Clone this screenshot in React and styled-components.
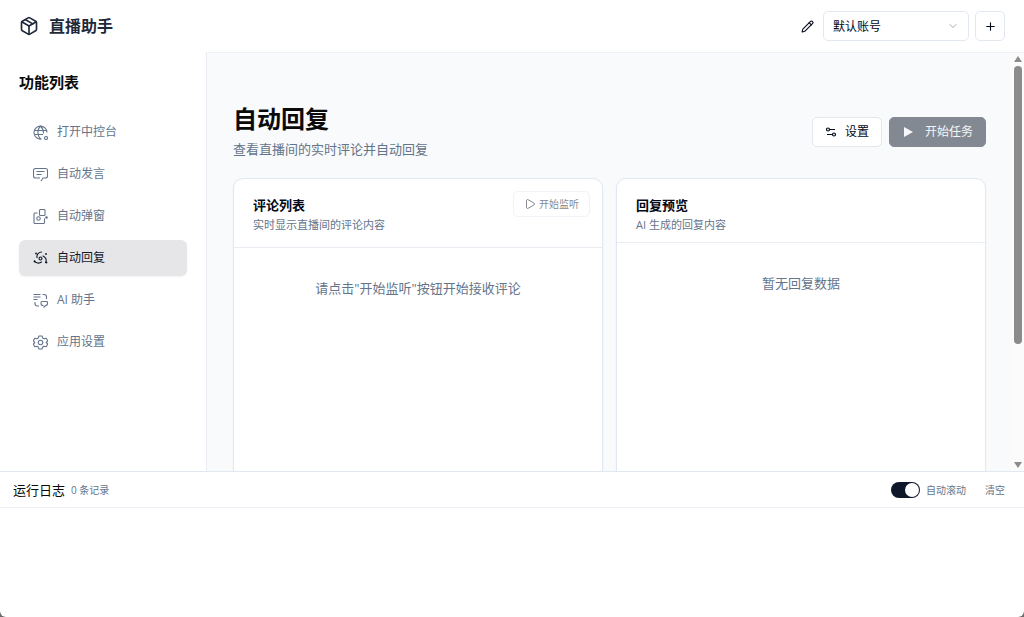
import React, { useState } from 'react'
import styled, { createGlobalStyle } from 'styled-components';
import { Pencil, Plus, ChevronDown, Play, Package } from 'lucide-react';

const GlobalStyle = createGlobalStyle`
*{
  box-sizing: border-box;
}
body{
  margin: 0;
  background-color: #6b6b6b;
}
button, select, input{
  font: inherit;
  color: inherit;
  margin: 0;
}
h1, h2, h3, p{
  margin: 0;
}
`
const Container = styled.div`
height: 100vh;
display: flex;
flex-direction: column;
overflow: hidden;
background-color: #ffffff;
border-radius: 0 0 6px 6px;
color: #020817;
font-family: "Open Sans", "Noto Sans CJK SC", sans-serif;
font-size: 12px;
line-height: 18px;
`
const Header = styled.header`
flex: none;
height: 52px;
padding: 0 19px;
display: flex;
align-items: center;
justify-content: space-between;
`
const Logo = styled.div`
display: flex;
align-items: center;
gap: 10px;
font-size: 16px;
font-weight: bold;
color: #1e293b;
`
const Account = styled.div`
display: flex;
align-items: center;
gap: 6px;
`
const IconButton = styled.button`
width: ${({$plain})=>$plain ? '20px' : '30px'};
height: 30px;
padding: 0;
display: flex;
align-items: center;
justify-content: center;
border: 1px solid ${({$plain})=>$plain ? 'transparent' : '#e2e8f0'};
border-radius: 5px;
background-color: transparent;
cursor: pointer;
`
const SelectBox = styled.label`
position: relative;
width: 146px;
svg{
  position: absolute;
  right: 10px;
  top: 9px;
  color: #a3adba;
  pointer-events: none;
}
`
const Select = styled.select`
appearance: none;
display: block;
width: 100%;
height: 30px;
padding: 1px 9px 0;
border: 1px solid #e2e8f0;
border-radius: 5px;
background-color: #ffffff;
`
const Body = styled.div`
flex: 1;
min-height: 0;
display: flex;
`
const Sidebar = styled.aside`
flex: none;
width: 206px;
padding: 20px 19px;
`
const SideTitle = styled.h2`
font-size: 15px;
line-height: 20px;
margin-bottom: 22px;
color: #0a0a0a;
`
const Nav = styled.nav`
display: flex;
flex-direction: column;
gap: 6px;
`
const Item = styled.a`
height: 36px;
padding: 0 14px;
display: flex;
align-items: center;
gap: 9px;
border-radius: 6px;
text-decoration: none;
color: ${({$active})=>$active ? '#0f172a' : '#64748b'};
background-color: ${({$active})=>$active ? '#e6e6e9' : 'transparent'};
box-shadow: ${({$active})=>$active ? '0 1px 2px #0000000d' : 'none'};
`
const Main = styled.main`
flex: 1;
min-width: 0;
display: flex;
border-top: 1px solid #edf0f4;
border-left: 1px solid #e9edf3;
background-color: #f8fafc;
`
const Content = styled.div`
flex: 1;
min-width: 0;
padding: 51px 26px 0;
overflow: hidden;
`
const ScrollBar = styled.div`
flex: none;
width: 12px;
padding: 3px 0;
display: flex;
flex-direction: column;
align-items: center;
gap: 4px;
background-color: #fbfbfc;
color: #8b8b8b;
svg{
  flex: none;
}
`
const Track = styled.div`
flex: 1;
width: 8px;
`
const Thumb = styled.div`
height: 71%;
border-radius: 4px;
background-color: #8b8b8b;
`
const PageHead = styled.div`
display: flex;
align-items: center;
justify-content: space-between;
margin-bottom: 19px;
`
const Title = styled.h1`
font-size: 24px;
line-height: 30px;
margin-bottom: 5px;
color: #0a0a0a;
`
const Text = styled.p`
font-size: ${({$small})=>$small ? '11px' : '13px'};
line-height: 20px;
color: #64748b;
`
const Actions = styled.div`
display: flex;
gap: 7px;
`
const Button = styled.button`
height: 30px;
padding: 0 12px;
display: flex;
align-items: center;
gap: ${({$primary})=>$primary ? '11px' : '8px'};
border: 1px solid ${({$primary})=>$primary ? '#838993' : '#e2e8f0'};
border-radius: 5px;
color: ${({$primary})=>$primary ? '#f5f7f9' : '#020817'};
background-color: ${({$primary})=>$primary ? '#838993' : '#ffffff'};
cursor: pointer;
`
const ListenButton = styled.button`
height: 26px;
padding: 0 10px;
display: flex;
align-items: center;
gap: 3px;
border: 1px solid #f0f3f7;
border-radius: 5px;
background-color: #ffffff;
color: #85898f;
font-size: 10px;
cursor: pointer;
`
const Cards = styled.div`
display: grid;
grid-template-columns: 1fr 1fr;
gap: 13px;
`
const Card = styled.section`
height: 460px;
border: 1px solid #e2e8f0;
border-radius: 10px;
background-color: #ffffff;
box-shadow: 0 1px 2px #0000000d;
`
const CardHead = styled.div`
display: flex;
justify-content: space-between;
padding: ${({$tall})=>$tall ? '12px 12px 8px 19px' : '12px 19px 3px'};
border-bottom: 1px solid #e9edf3;
`
const CardInfo = styled.div`
padding: 4px 0;
`
const CardTitle = styled.h3`
font-size: 13px;
line-height: 20px;
`
const Empty = styled.p`
padding: 30px 0;
font-size: 13px;
line-height: 20px;
text-align: center;
color: #64748b;
`
const Log = styled.section`
flex: none;
height: 146px;
border-top: 1px solid #e2e8f0;
`
const LogHead = styled.div`
height: 36px;
padding: 0 19px 0 13px;
display: flex;
align-items: center;
justify-content: space-between;
border-bottom: 1px solid #eceff5;
`
const LogGroup = styled.div`
display: flex;
align-items: center;
gap: ${({$wide})=>$wide ? '19px' : '6px'};
font-size: 10px;
color: #64748b;
`
const LogTitle = styled.h2`
font-size: 13px;
font-weight: normal;
color: #0a0a0a;
`
const SwitchLabel = styled.label`
display: flex;
align-items: center;
gap: 6px;
`
const Switch = styled.input`
appearance: none;
width: 29px;
height: 16px;
padding: 1px;
display: flex;
justify-content: ${({checked})=>checked ? 'flex-end' : 'flex-start'};
border-radius: 8px;
background-color: ${({checked})=>checked ? '#0f172a' : '#cbd5e1'};
&::before{
  content: '';
  width: 14px;
  height: 14px;
  border-radius: 50%;
  background-color: #ffffff;
}
`
const ClearButton = styled.button`
padding: 0;
border: none;
background: none;
cursor: pointer;
`

const Icon = ({children}) => (
  <svg width="15" height="15" viewBox="1 1 30 30" fill="none" stroke="currentColor" strokeWidth="2.200" aria-hidden="true">
    {children}
  </svg>
)
const GlobeIcon = () => (
  <Icon>
    <path d="M29 16A13 13 0 1 0 18 29M3 12h25M3 20h18M16 3c-7 7-7 19 0 26M16 3c4 4 6 9 6 15"/>
    <circle cx="27" cy="27" r="3"/>
  </Icon>
)
const ChatIcon = () => (
  <Icon>
    <path d="M17 29l4-6h5a4 4 0 0 0 4-4V8a4 4 0 0 0-4-4H6a4 4 0 0 0-4 4v11a4 4 0 0 0 4 4h9M8 10h16M8 16h10"/>
  </Icon>
)
const PopupIcon = () => (
  <Icon>
    <path d="M10 9H5a2 2 0 0 0-2 2v17a2 2 0 0 0 2 2h17a2 2 0 0 0 2-2v-8"/>
    <rect x="14" y="2" width="11" height="12" rx="2"/>
    <circle cx="12" cy="20" r="3.500"/>
    <circle cx="28" cy="18" r="1.500" fill="currentColor"/>
  </Icon>
)
const ReplyIcon = () => (
  <Icon>
    <circle cx="16" cy="16" r="3"/>
    {[0, 120, 240].map((angle)=>(
      <path key={angle} transform={`rotate(${angle} 16 16)`} d="M19 3C12 3 8 8 9 15"/>
    ))}
    <g fill="currentColor" stroke="none">
      <circle cx="7" cy="6" r="1.800"/>
      <circle cx="27" cy="7" r="1.800"/>
      <circle cx="4" cy="22" r="1.800"/>
      <circle cx="28" cy="24" r="1.800"/>
    </g>
  </Icon>
)
const AiIcon = () => (
  <Icon>
    <path d="M2 4h14M2 9h14M2 14h8M20 4h3a5 5 0 0 1 5 5v4M5 19v3a5 5 0 0 0 5 5h3"/>
    <path d="M22 26h-1a4 4 0 0 1-4-4v-2a2 2 0 0 1 2-2h9a2 2 0 0 1 2 2v2a4 4 0 0 1-4 4l-4 4"/>
  </Icon>
)
const SettingIcon = () => (
  <Icon>
    <circle cx="16" cy="16" r="4.500"/>
    <path d="M13 3h6l1.500 4 2.500 1.500 4.500-1 3 5.500-3 3 3 3-3 5.500-4.500-1-2.500 1.500L19 29h-6l-1.500-4L9 23.500l-4.500 1L1.500 19l3-3-3-3 3-5.500 4.500 1L11.500 7z" strokeLinejoin="round"/>
  </Icon>
)
const SlidersIcon = () => (
  <svg width="12" height="12" viewBox="0 0 12 12" fill="none" stroke="currentColor" strokeWidth="1.200" aria-hidden="true">
    <circle cx="3" cy="3.500" r="1.500"/>
    <path d="M4.500 3.500H10M2 8.500h5.500"/>
    <circle cx="9" cy="8.500" r="1.500"/>
  </svg>
)
const StartIcon = () => (
  <svg width="12" height="12" viewBox="0 0 12 12" aria-hidden="true">
    <path d="M2 1l9 5-9 5z" fill="currentColor"/>
  </svg>
)

const items = [
  {name: '打开中控台', icon: <GlobeIcon/>},
  {name: '自动发言', icon: <ChatIcon/>},
  {name: '自动弹窗', icon: <PopupIcon/>},
  {name: '自动回复', icon: <ReplyIcon/>},
  {name: 'AI 助手', icon: <AiIcon/>},
  {name: '应用设置', icon: <SettingIcon/>},
]

const App = () => {
  const [active,setActive] = useState('自动回复')
  const [autoScroll,setAutoScroll] = useState(true)

  return (
    <Container>
        <GlobalStyle/>
        <Header>
            <Logo><Package size={20} strokeWidth={2}/>直播助手</Logo>
            <Account>
                <IconButton $plain aria-label="编辑"><Pencil size={13}/></IconButton>
                <SelectBox>
                    <Select aria-label="账号"><option>默认账号</option></Select>
                    <ChevronDown size={12}/>
                </SelectBox>
                <IconButton aria-label="添加"><Plus size={13}/></IconButton>
            </Account>
        </Header>
        <Body>
            <Sidebar>
                <SideTitle>功能列表</SideTitle>
                <Nav>
                    {items.map((item)=>(
                      <Item key={item.name} href="#" $active={item.name === active}
                      onClick={()=>setActive(item.name)}
                      >{item.icon}{item.name}</Item>
                    ))}
                </Nav>
            </Sidebar>
            <Main>
                <Content>
                    <PageHead>
                        <div>
                            <Title>自动回复</Title>
                            <Text>查看直播间的实时评论并自动回复</Text>
                        </div>
                        <Actions>
                            <Button><SlidersIcon/>设置</Button>
                            <Button $primary><StartIcon/>开始任务</Button>
                        </Actions>
                    </PageHead>
                    <Cards>
                        <Card>
                            <CardHead $tall>
                                <CardInfo>
                                    <CardTitle>评论列表</CardTitle>
                                    <Text $small>实时显示直播间的评论内容</Text>
                                </CardInfo>
                                <ListenButton><Play size={12}/>开始监听</ListenButton>
                            </CardHead>
                            <Empty>请点击"开始监听"按钮开始接收评论</Empty>
                        </Card>
                        <Card>
                            <CardHead>
                                <CardInfo>
                                    <CardTitle>回复预览</CardTitle>
                                    <Text $small>AI 生成的回复内容</Text>
                                </CardInfo>
                            </CardHead>
                            <Empty>暂无回复数据</Empty>
                        </Card>
                    </Cards>
                </Content>
                <ScrollBar>
                    <svg width="8" height="6" viewBox="0 0 8 6"><path d="M4 0l4 6H0z" fill="currentColor"/></svg>
                    <Track><Thumb/></Track>
                    <svg width="8" height="6" viewBox="0 0 8 6"><path d="M0 0h8L4 6z" fill="currentColor"/></svg>
                </ScrollBar>
            </Main>
        </Body>
        <Log>
            <LogHead>
                <LogGroup>
                    <LogTitle>运行日志</LogTitle>
                    <span>0 条记录</span>
                </LogGroup>
                <LogGroup $wide>
                    <SwitchLabel>
                        <Switch type="checkbox" checked={autoScroll} onChange={()=>setAutoScroll(!autoScroll)}/>
                        自动滚动
                    </SwitchLabel>
                    <ClearButton>清空</ClearButton>
                </LogGroup>
            </LogHead>
        </Log>
    </Container>
  )
}

export default App
